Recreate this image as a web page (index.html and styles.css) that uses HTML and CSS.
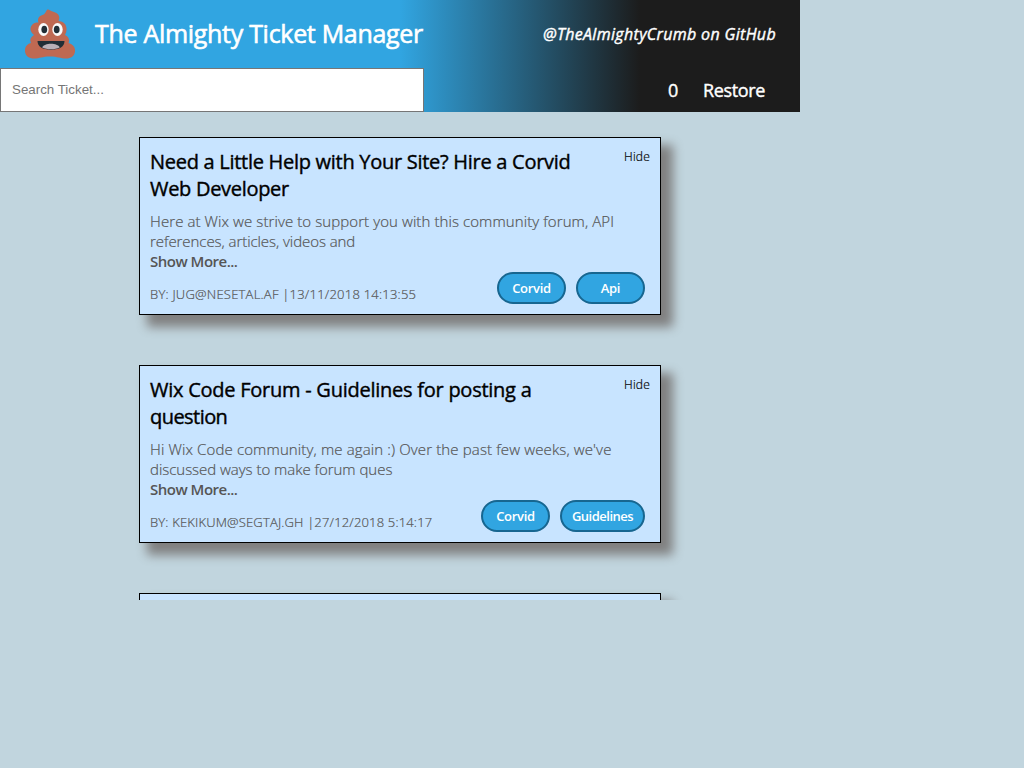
FILE: index.html
```html
<!DOCTYPE html>
<html lang="en">
<head>
<meta charset="utf-8">
<title>The Almighty Ticket Manager</title>
<link rel="stylesheet" href="styles.css">
</head>
<body>
<div class="app">
  <header class="header">
    <div class="brand">
      <svg class="logo" viewBox="0 0 50 50">
        <path fill="#bf6952" d="M22 .7C24-.2 25 2 29 3c5 1.500 6.500 5 4.500 9 5.500.500 8.500 4 8 9-.200 2-.700 3.500-1.500 5 3.500 1.500 5 4.500 3.500 8 4.500 1 7 4.500 6.500 8.500C49.500 47 46 49.500 41 49.500c-6 0-8-2-16-2s-10 2-16 2c-5 0-8.500-2.500-9-7-.500-4.500 2-7.500 6-8.500-1.500-3-.500-6 3-8-4-3-4.500-7-2-10 1.500-2 3.500-2.500 6.500-2.500-1.500-4 .500-6.500 4-7.500C20 5.200 20.500 3 22 .7Z"/>
        <ellipse cx="18.500" cy="20.500" rx="5.200" ry="6.500" fill="#fafafa"/>
        <ellipse cx="32.500" cy="20.500" rx="5.200" ry="6.500" fill="#fafafa"/>
        <ellipse cx="19.300" cy="20.500" rx="2.900" ry="3.800" fill="#212e36"/>
        <ellipse cx="31.700" cy="20.500" rx="2.900" ry="3.800" fill="#212e36"/>
        <path fill="#212e36" d="M12.500 32h27c0 5.500-5 8.700-13.500 8.700S12.500 37.500 12.500 32Z"/>
        <path fill="#b9b1b8" d="M17.200 38.500c2-5 15.500-5 17.500 0-4.500 2.400-13 2.400-17.500 0Z"/>
      </svg>
      <h1 class="title">The Almighty Ticket Manager</h1>
    </div>
    <div class="credit">@TheAlmightyCrumb on GitHub</div>
    <input class="search" placeholder="Search Ticket...">
    <div class="hidden-tickets"><span class="count">0</span><span class="restore">Restore</span></div>
  </header>
  <main class="tickets">
    <article class="ticket">
      <div class="ticket-top"><h2 class="ticket-title"><span class="t1">Need a Little Help with Your Site? Hire a Corvid</span><br><span class="t2">Web Developer</span></h2><span class="hide">Hide</span></div>
      <p class="content"><span class="c1">Here at Wix we strive to support you with this community forum, API</span><br><span class="c2">references, articles, videos and</span></p>
      <span class="more">Show More...</span>
      <footer class="foot"><span class="by b1">BY: JUG@NESETAL.AF |13/11/2018 14:13:55</span>
        <div class="labels"><span class="label">Corvid</span><span class="label">Api</span></div></footer>
    </article>
    <article class="ticket">
      <div class="ticket-top"><h2 class="ticket-title"><span class="t3">Wix Code Forum - Guidelines for posting a</span><br><span class="t4">question</span></h2><span class="hide">Hide</span></div>
      <p class="content"><span class="c3">Hi Wix Code community, me again :) Over the past few weeks, we've</span><br><span class="c4">discussed ways to make forum ques</span></p>
      <span class="more">Show More...</span>
      <footer class="foot"><span class="by b2">BY: KEKIKUM@SEGTAJ.GH |27/12/2018 5:14:17</span>
        <div class="labels"><span class="label">Corvid</span><span class="label wide">Guidelines</span></div></footer>
    </article>
    <article class="ticket"></article>
  </main>
</div>
</body>
</html>
```
FILE: styles.css
```css
* { box-sizing: border-box; }
body { margin: 0; background: #c1d5de; font-family: "Open Sans", "Noto Sans", sans-serif; }
h1, h2, p { margin: 0; }
.app { width: 800px; height: 600px; overflow: hidden; }
.header { display: grid; grid-template-columns: 424px 1fr; grid-template-rows: 68px 44px; align-items: center; color: #fff; background: linear-gradient(to right, #31a5e1 50%, #1c1c1c 80%); }
.brand { display: flex; align-items: center; padding-left: 25px; gap: 20px; white-space: nowrap; }
.logo { width: 50px; height: 50px; flex: none; }
.title { font-size: 25px; line-height: 34px; font-weight: 500; letter-spacing: -0.3px; -webkit-text-stroke: 0.6px; padding-bottom: 2px; }
.credit { font-size: 16px; font-style: italic; font-weight: 500; letter-spacing: 0.33px; -webkit-text-stroke: 0.4px; text-align: right; padding-right: 24px; padding-bottom: 1px; white-space: nowrap; }
.search { width: 424px; height: 44px; border: 1px solid #767676; padding: 0 11px 2px; font: 13.333px "Liberation Sans", sans-serif; }
.hidden-tickets { display: flex; justify-content: flex-end; gap: 25px; padding-right: 35px; font-size: 18px; font-weight: 500; letter-spacing: -0.35px; -webkit-text-stroke: 0.4px; }
.tickets { padding-top: 25px; display: flex; flex-direction: column; align-items: center; gap: 50px; }
.ticket { width: 522px; height: 178px; flex: none; border: 1px solid #000; background: #c8e4ff; box-shadow: 10px 10px 10px 2px gray; padding: 10px; white-space: nowrap; }
.ticket-top { display: flex; justify-content: space-between; height: 63px; }
.ticket-title { font-size: 20px; line-height: 27px; font-weight: 500; -webkit-text-stroke: 0.4px; }
.t1 { letter-spacing: -0.28px; }
.t2 { letter-spacing: -0.3px; }
.t3 { letter-spacing: -0.25px; }
.t4 { letter-spacing: -0.55px; }
.hide { font-size: 12px; line-height: 17px; font-weight: 300; -webkit-text-stroke: 0.2px; letter-spacing: 0.2px; }
.content, .more { font-size: 15px; line-height: 20px; color: #555; font-weight: 300; }
.content, .by { -webkit-text-stroke: 0.2px; }
.c1 { letter-spacing: 0.09px; }
.c2 { letter-spacing: -0.06px; }
.c3 { letter-spacing: 0.13px; }
.c4 { letter-spacing: -0.03px; }
.more { display: block; font-weight: 600; letter-spacing: -0.5px; }
.foot { display: flex; justify-content: space-between; padding: 1px 5px 0 0; }
.by { font-size: 13px; line-height: 18px; margin-top: 13px; color: #555; font-weight: 300; }
.b1 { letter-spacing: 0.23px; }
.b2 { letter-spacing: 0.17px; }
.labels { display: flex; gap: 10px; }
.label { width: 69px; height: 32px; border: 2px solid #176690; border-radius: 16px; background: #31a5e1; color: #fff; font-size: 13px; line-height: 28px; font-weight: 600; letter-spacing: -0.3px; text-align: center; }
.wide { width: 85px; letter-spacing: -0.5px; }
```
